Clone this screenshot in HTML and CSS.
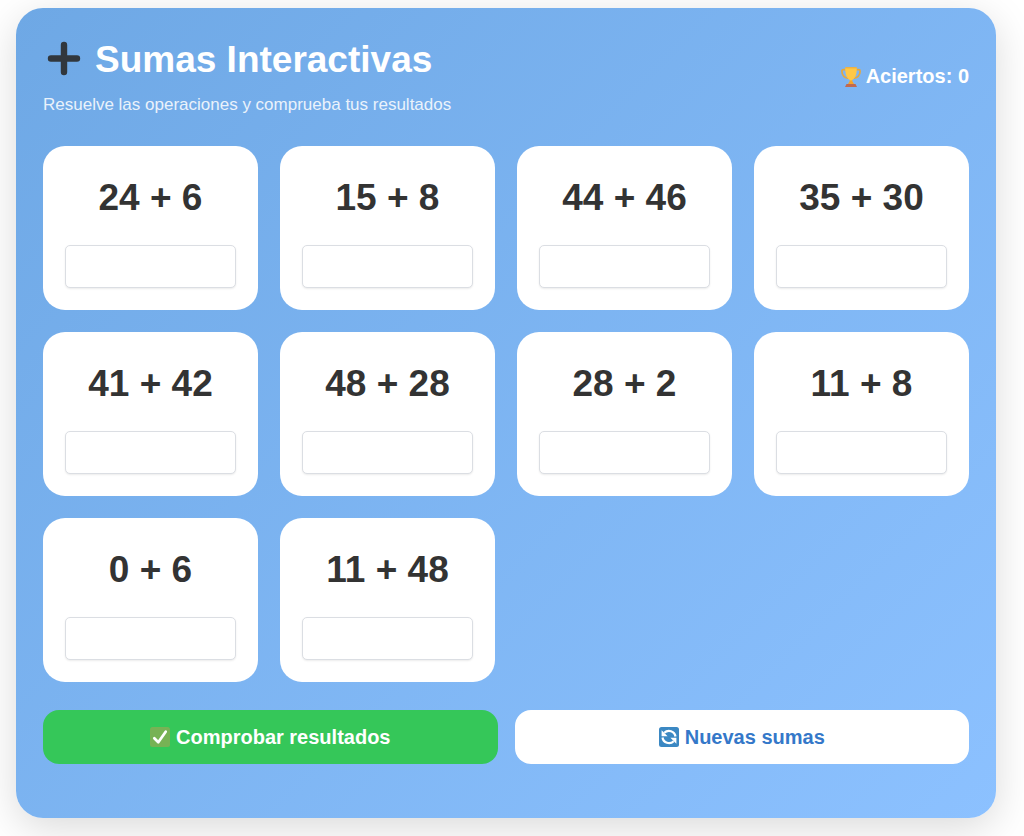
FILE: index.html
```
<!DOCTYPE html>
<html lang="es">
<head>
    <meta charset="UTF-8">
    <meta name="viewport" content="width=device-width, initial-scale=1.0">
    <title>Sumas Interactivas</title>
    <link rel="stylesheet" href="styles.css">
</head>
<body>
    <main class="panel">
        <header class="header">
            <div>
                <h1 class="title">
                    <svg class="icon-plus" viewBox="0 0 42 42" aria-hidden="true">
                        <path d="M21 6v27M8 19.500h26" fill="none" stroke="#31373d" stroke-width="6.400" stroke-linecap="round"/>
                    </svg>
                    Sumas Interactivas
                </h1>
                <p class="subtitle">Resuelve las operaciones y comprueba tus resultados</p>
            </div>
            <div class="score">
                <svg class="icon" viewBox="0 0 20 20" aria-hidden="true">
                    <path d="M5 2.700H2.200Q.9 2.700.9 4.200C1 8 3.500 10.700 7.500 11.500M15 2.700h2.800q1.300 0 1.300 1.500C19 8 16.500 10.700 12.500 11.500" fill="none" stroke="#e3a840" stroke-width="1.700"/>
                    <path d="M8.700 11h2.600v3l1.700 3H7l1.700-3z" fill="#f4a52c"/>
                    <path d="M4.300.3h11.400c.3 6.300-.8 11.200-5.700 13.400C5.100 11.500 4 6.600 4.300.3z" fill="#ffc845"/>
                    <path d="M4.300.3h11.400v1H4.300z" fill="#f0a936"/>
                    <path d="M5.500 17h9l1.500 3H4z" fill="#c1694f"/>
                </svg>
                <span>Aciertos: <span id="score">0</span></span>
            </div>
        </header>

        <form id="sumsForm">
            <div class="grid" id="grid">
                <div class="card"><label for="s1">24 + 6</label><input type="text" inputmode="numeric" id="s1" data-result="30"></div>
                <div class="card"><label for="s2">15 + 8</label><input type="text" inputmode="numeric" id="s2" data-result="23"></div>
                <div class="card"><label for="s3">44 + 46</label><input type="text" inputmode="numeric" id="s3" data-result="90"></div>
                <div class="card"><label for="s4">35 + 30</label><input type="text" inputmode="numeric" id="s4" data-result="65"></div>
                <div class="card"><label for="s5">41 + 42</label><input type="text" inputmode="numeric" id="s5" data-result="83"></div>
                <div class="card"><label for="s6">48 + 28</label><input type="text" inputmode="numeric" id="s6" data-result="76"></div>
                <div class="card"><label for="s7">28 + 2</label><input type="text" inputmode="numeric" id="s7" data-result="30"></div>
                <div class="card"><label for="s8">11 + 8</label><input type="text" inputmode="numeric" id="s8" data-result="19"></div>
                <div class="card"><label for="s9">0 + 6</label><input type="text" inputmode="numeric" id="s9" data-result="6"></div>
                <div class="card"><label for="s10">11 + 48</label><input type="text" inputmode="numeric" id="s10" data-result="59"></div>
            </div>

            <div class="actions">
                <button type="submit" class="btn btn-check">
                    <svg class="icon" viewBox="0 0 20 20" aria-hidden="true">
                        <rect width="20" height="20" rx="2.500" fill="#77b255"/>
                        <path d="M4.300 11.300l4 4L15.700 4.700" fill="none" stroke="#fff" stroke-width="2.700" stroke-linecap="round" stroke-linejoin="round"/>
                    </svg>
                    Comprobar resultados
                </button>
                <button type="button" class="btn btn-new" id="newSums">
                    <svg class="icon" viewBox="0 0 20 20" aria-hidden="true">
                        <rect width="20" height="20" rx="2.500" fill="#3b88c3"/>
                        <path d="M5.300 5.800A6.600 6.600 0 0 1 16.500 9.500M14.700 14.200A6.600 6.600 0 0 1 3.500 10.500" fill="none" stroke="#fff" stroke-width="2.200"/>
                        <path d="M2.600 3.200v6h6zM17.400 16.800v-6h-6z" fill="#fff"/>
                    </svg>
                    Nuevas sumas
                </button>
            </div>
        </form>
    </main>

    <script>
        const inputs = document.querySelectorAll('.card input');
        const score = document.getElementById('score');

        // Check every answer and update the counter
        document.getElementById('sumsForm').addEventListener('submit', (e) => {
            e.preventDefault();
            let hits = 0;
            inputs.forEach((input) => {
                const ok = input.value.trim() === input.dataset.result;
                input.classList.toggle('correct', ok);
                input.classList.toggle('wrong', !ok);
                if (ok) hits++;
            });
            score.textContent = hits;
        });

        // Generate new operations
        document.getElementById('newSums').addEventListener('click', () => {
            inputs.forEach((input) => {
                const a = Math.floor(Math.random() * 50);
                const b = Math.floor(Math.random() * 50);
                input.labels[0].textContent = `${a} + ${b}`;
                input.dataset.result = a + b;
                input.value = '';
                input.classList.remove('correct', 'wrong');
            });
            score.textContent = 0;
        });
    </script>
</body>
</html>
```
FILE: styles.css
```
* {
    box-sizing: border-box;
}

body {
    margin: 0;
    padding: 8px 28px 18px 16px;
    background: #fff;
    font-family: "Liberation Sans", Arial, sans-serif;
}

.panel {
    padding: 27px 27px 54px;
    border-radius: 27px;
    background: linear-gradient(135deg, #6ea8e5, #8cc1ff);
    box-shadow: 0 10px 40px rgba(0, 0, 0, 0.15);
}

.header {
    display: flex;
    justify-content: space-between;
    align-items: center;
    margin-bottom: 28px;
    color: #fff;
}

.title {
    display: flex;
    align-items: center;
    gap: 10px;
    margin: 0 0 6px;
    font-size: 37px;
    line-height: 50px;
}

.icon-plus {
    width: 42px;
    height: 42px;
}

.subtitle {
    margin: 0;
    font-size: 17px;
    line-height: 27px;
    opacity: 0.85;
}

.score {
    display: flex;
    align-items: center;
    gap: 5px;
    font-size: 20px;
    font-weight: bold;
}

.icon {
    width: 20px;
    height: 20px;
}

.grid {
    display: grid;
    grid-template-columns: repeat(auto-fill, minmax(200px, 1fr));
    gap: 22px;
}

.card {
    padding: 22px;
    border-radius: 22px;
    background: #fff;
    text-align: center;
}

.card label {
    display: block;
    margin-bottom: 17px;
    color: #333;
    font-size: 37px;
    font-weight: bold;
    line-height: 60px;
}

.card input {
    display: block;
    width: 100%;
    height: 43px;
    border: 1px solid #dbdee3;
    border-radius: 5px;
    box-shadow: 0 1px 2px rgba(0, 0, 0, 0.08);
    font: 20px "Liberation Sans", Arial, sans-serif;
    text-align: center;
}

.card input.correct {
    border-color: #34c759;
}

.card input.wrong {
    border-color: #ff3b30;
}

.actions {
    display: flex;
    gap: 17px;
    margin-top: 28px;
}

.btn {
    display: flex;
    flex: 1;
    justify-content: center;
    align-items: center;
    gap: 6px;
    height: 54px;
    border: none;
    border-radius: 16px;
    font: bold 20px "Liberation Sans", Arial, sans-serif;
    cursor: pointer;
}

.btn-check {
    background: #35c759;
    color: #fff;
}

.btn-new {
    background: #fff;
    color: #3478c9;
}
```
